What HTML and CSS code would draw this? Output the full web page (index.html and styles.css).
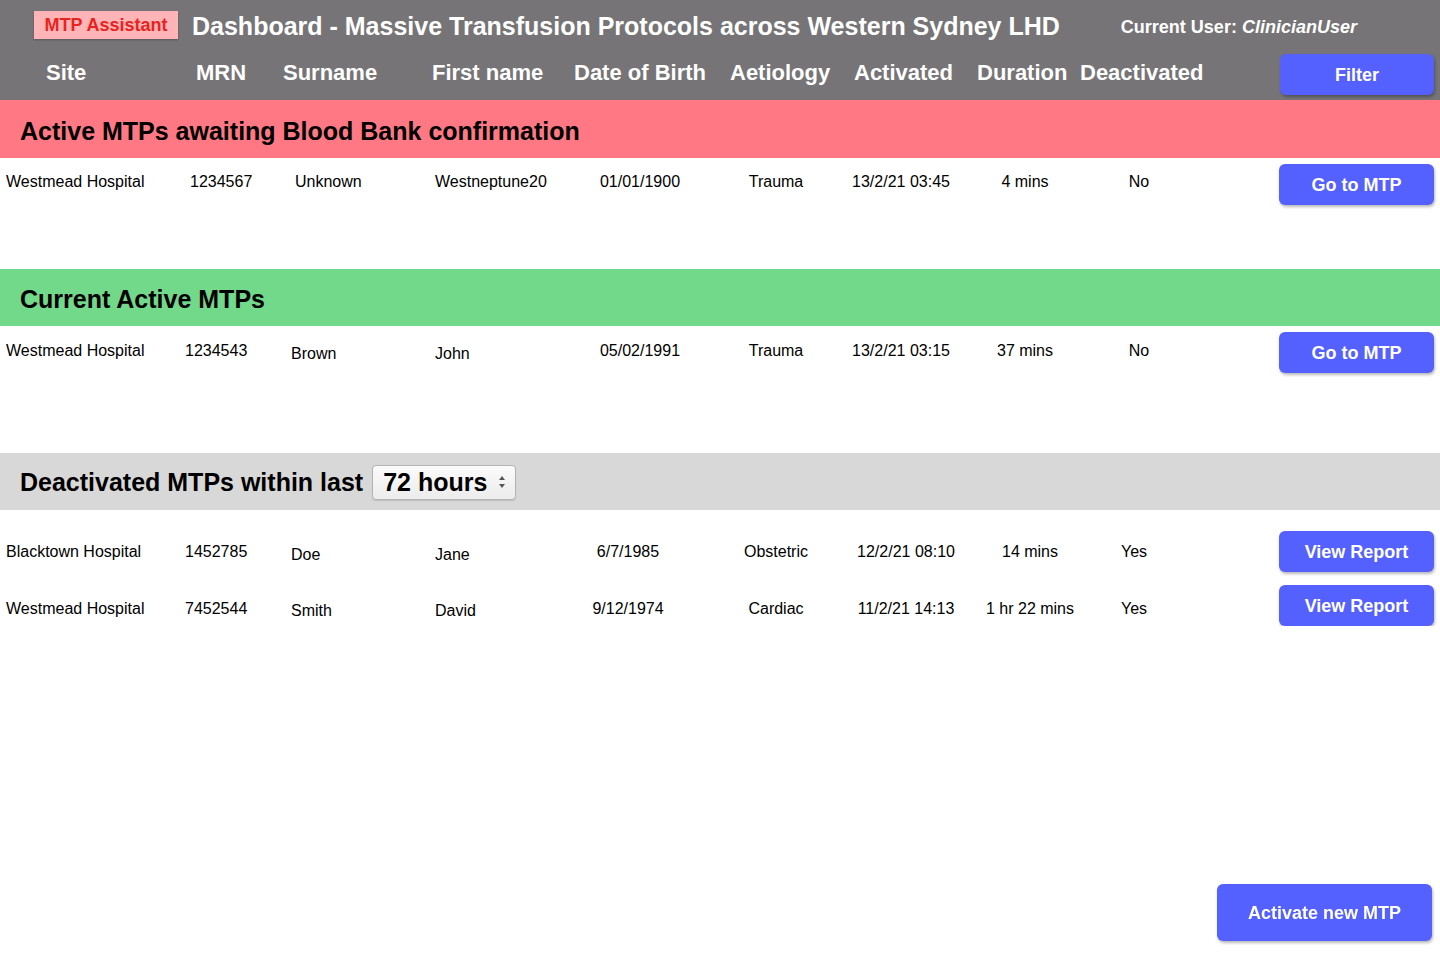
FILE: index.html
```html
<!DOCTYPE html>
<html lang="en">
<head>
<meta charset="utf-8">
<title>MTP Assistant Dashboard</title>
<link rel="stylesheet" href="styles.css">
</head>
<body>
<header class="topbar">
  <div class="title-row">
    <span class="badge">MTP Assistant</span>
    <h1 class="page-title">Dashboard - Massive Transfusion Protocols across Western Sydney LHD</h1>
    <span class="user">Current User: <em>ClinicianUser</em></span>
  </div>
  <div class="col-row">
    <span>Site</span>
    <span>MRN</span>
    <span>Surname</span>
    <span>First name</span>
    <span>Date of Birth</span>
    <span>Aetiology</span>
    <span>Activated</span>
    <span>Duration</span>
    <span>Deactivated</span>
    <span></span>
    <button class="btn btn-filter">Filter</button>
  </div>
</header>

<section class="section awaiting">
  <h2 class="band band-red">Active MTPs awaiting Blood Bank confirmation</h2>
  <div class="rows">
    <div class="row row-active">
      <span>Westmead Hospital</span>
      <span class="mrn1">1234567</span>
      <span class="sur1">Unknown</span>
      <span>Westneptune20</span>
      <span class="c">01/01/1900</span>
      <span class="c">Trauma</span>
      <span class="c">13/2/21 03:45</span>
      <span class="c">4 mins</span>
      <span class="c">No</span>
      <span></span>
      <button class="btn">Go to MTP</button>
    </div>
  </div>
</section>

<section class="section current">
  <h2 class="band band-green">Current Active MTPs</h2>
  <div class="rows">
    <div class="row row-active row-second">
      <span>Westmead Hospital</span>
      <span>1234543</span>
      <span class="low">Brown</span>
      <span class="low">John</span>
      <span class="c">05/02/1991</span>
      <span class="c">Trauma</span>
      <span class="c">13/2/21 03:15</span>
      <span class="c">37 mins</span>
      <span class="c">No</span>
      <span></span>
      <button class="btn">Go to MTP</button>
    </div>
  </div>
</section>

<section class="section deactivated">
  <div class="band band-grey">
    <h2 class="band-title">Deactivated MTPs within last</h2>
    <div class="select">
      <span>72 hours</span>
      <svg class="arrows" width="8" height="14" viewBox="0 0 8 14" aria-hidden="true">
        <path d="M4 1 L7 5 L1 5 Z" fill="#555"/>
        <path d="M4 13 L7 9 L1 9 Z" fill="#555"/>
      </svg>
    </div>
  </div>
  <div class="rows rows-deact">
    <div class="row row-deact">
      <span>Blacktown Hospital</span>
      <span>1452785</span>
      <span class="low">Doe</span>
      <span class="low">Jane</span>
      <span class="c">6/7/1985</span>
      <span class="c">Obstetric</span>
      <span class="c">12/2/21 08:10</span>
      <span class="c">14 mins</span>
      <span class="c">Yes</span>
      <span></span>
      <button class="btn">View Report</button>
    </div>
    <div class="row row-deact row-shift">
      <span>Westmead Hospital</span>
      <span>7452544</span>
      <span class="low">Smith</span>
      <span class="low">David</span>
      <span class="c">9/12/1974</span>
      <span class="c">Cardiac</span>
      <span class="c">11/2/21 14:13</span>
      <span class="c">1 hr 22 mins</span>
      <span class="c">Yes</span>
      <span></span>
      <button class="btn">View Report</button>
    </div>
  </div>
</section>

<button class="btn btn-activate">Activate new MTP</button>
</body>
</html>
```

FILE: styles.css
```css
* { box-sizing: border-box; }

html, body {
  margin: 0;
  padding: 0;
  background: #ffffff;
  font-family: "Liberation Sans", Arial, Helvetica, sans-serif;
  color: #000;
}

h1, h2 { margin: 0; font-weight: bold; }

.topbar {
  background: #767476;
  height: 100px;
  padding: 11px 6px 5px 0;
  color: #fff;
}

.title-row {
  display: flex;
  align-items: center;
  height: 28px;
  padding-left: 34px;
}

.badge {
  background: #ffb4b7;
  color: #e8231e;
  font-weight: bold;
  font-size: 18px;
  height: 28px;
  width: 144px;
  display: flex;
  align-items: center;
  justify-content: center;
  box-shadow: 0 1px 2px rgba(0,0,0,0.25);
}

.page-title {
  font-size: 25px;
  margin-left: 14px;
  color: #fff;
  white-space: nowrap;
  position: relative;
  top: 1px;
}

.user {
  margin-left: 61px;
  font-size: 18px;
  font-weight: bold;
  white-space: nowrap;
  position: relative;
  top: 2px;
}
.user em { font-style: italic; }

.col-row {
  display: grid;
  grid-template-columns: 150px 87px 149px 142px 156px 124px 123px 103px auto 1fr 154px;
  align-items: center;
  height: 41px;
  margin-top: 15px;
  padding-left: 46px;
  font-size: 22px;
  font-weight: bold;
  white-space: nowrap;
}
.col-row > span { position: relative; top: -2px; }

.btn {
  background: #5561fe;
  color: #fff;
  border: none;
  border-radius: 6px;
  font-family: "Liberation Sans", Arial, Helvetica, sans-serif;
  font-weight: bold;
  font-size: 18px;
  height: 41px;
  width: 155px;
  box-shadow: 1px 2px 3px rgba(0,0,0,0.28);
  padding: 2px 0 0;
  cursor: pointer;
}
.btn-filter { width: 154px; }

.band {
  display: flex;
  align-items: center;
  padding-left: 20px;
  font-size: 25px;
  height: 58px;
}
.band-red { background: #ff7884; padding-top: 4px; }
.band-green { background: #72d88a; height: 57px; padding-top: 3px; }
.band-grey { background: #d8d8d8; height: 57px; padding-top: 1px; }
.band-title { font-size: 25px; }

.select {
  margin-left: 9px;
  height: 35px;
  width: 144px;
  border: 1px solid #b3b3b3;
  border-radius: 4px;
  background: linear-gradient(#fbfbfb, #ececec);
  display: flex;
  align-items: center;
  padding-left: 10px;
  padding-right: 9px;
  font-size: 25px;
  font-weight: bold;
  box-shadow: 0 1px 1px rgba(0,0,0,0.12);
}
.select span { flex: 1; }
.arrows { display: block; }

.awaiting .rows { height: 111px; }
.current .rows { height: 127px; }

.rows { padding-top: 6px; }
.rows-deact { padding-top: 21px; display: flex; flex-direction: column; gap: 13px; }

.row {
  display: grid;
  padding-left: 6px;
  padding-right: 6px;
  font-size: 16px;
  line-height: 18px;
  white-space: nowrap;
}
.row-active {
  grid-template-columns: 179px 106px 144px 135px 140px 132px 118px 130px 98px 1fr 155px;
  align-items: start;
}
.row-active > span { padding-top: 9px; }
.row-second > span { padding-top: 10px; }

.row-deact {
  grid-template-columns: 179px 106px 144px 135px 116px 180px 80px 168px 40px 1fr 155px;
  align-items: center;
}
.row-deact > span { position: relative; top: 0; }
.row-deact > span.low { top: 3px; }
.row-shift > span { top: 3px; }
.row-shift > span.low { top: 5px; }

.c { text-align: center; justify-self: center; }
.low { position: relative; top: 2px; }
.row-active .low { padding-top: 11px; }
.mrn1 { padding-left: 5px; }
.sur1 { padding-left: 4px; }

.btn-activate {
  position: fixed;
  right: 8px;
  bottom: 13px;
  width: 215px;
  height: 57px;
}
```
